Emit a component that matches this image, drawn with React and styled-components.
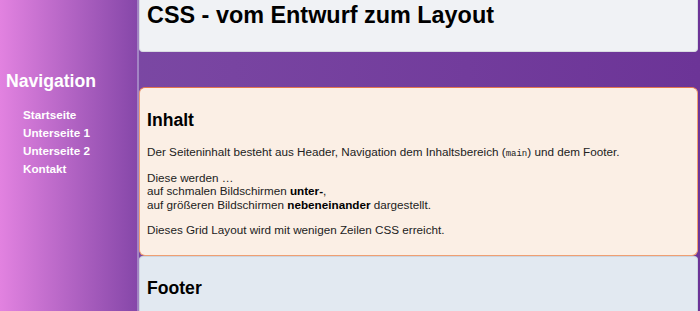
import React from 'react';
import styled, { createGlobalStyle } from 'styled-components';

const GlobalStyle = createGlobalStyle`
    html, body {
        margin: 0;
        padding: 0;
    }
    body {
        font-family: 'Liberation Sans', Arial, sans-serif;
        font-size: 11.7px;
        color: #222;
        background: linear-gradient(to right, #7e4ca6, #6c3497);
        overflow: hidden;
    }
`;

const links = ['Startseite', 'Unterseite 1', 'Unterseite 2', 'Kontakt'];

const App = () => {
    return (
        <>
            <GlobalStyle />
            <Page>
                <Nav>
                    <NavTitle>Navigation</NavTitle>
                    <NavList>
                        {links.map((link) => (
                            <li key={link}>
                                <NavLink href="#">{link}</NavLink>
                            </li>
                        ))}
                    </NavList>
                </Nav>
                <Header>
                    <Title>CSS - vom Entwurf zum Layout</Title>
                </Header>
                <Main>
                    <SectionTitle>Inhalt</SectionTitle>
                    <Text>
                        Der Seiteninhalt besteht aus Header, Navigation dem
                        Inhaltsbereich (<Code>main</Code>) und dem Footer.
                    </Text>
                    <Text>
                        Diese werden …
                        <br />
                        auf schmalen Bildschirmen <b>unter-</b>,
                        <br />
                        auf größeren Bildschirmen <b>nebeneinander</b>{' '}
                        dargestellt.
                    </Text>
                    <Text>Dieses Grid Layout wird mit wenigen Zeilen CSS erreicht.</Text>
                </Main>
                <Footer>
                    <SectionTitle>Footer</SectionTitle>
                </Footer>
            </Page>
        </>
    );
};

const Page = styled.div`
    display: grid;
    grid-template-columns: 139px 1fr;
    grid-template-rows: auto auto 1fr;
    min-height: 100vh;
    padding-right: 2px;
`;

const Nav = styled.nav`
    grid-column: 1;
    grid-row: 1 / span 3;
    background: linear-gradient(to right, #e282e0, #8647a9);
    border-right: 2px solid #a384c4;
    padding: 56px 6px 0;
`;

const NavTitle = styled.h2`
    margin: 15px 0 14px;
    font-size: 17.6px;
    font-weight: bold;
    color: #fff;
`;

const NavList = styled.ul`
    list-style: none;
    margin: 0;
    padding: 0 0 0 17px;
    li {
        line-height: 18px;
    }
`;

const NavLink = styled.a`
    color: #fff;
    font-weight: bold;
    font-size: 11.7px;
    text-decoration: none;
`;

const Header = styled.header`
    grid-column: 2;
    background: #f0f2f5;
    border: 1px solid #d9dbe2;
    border-top: none;
    border-radius: 0 0 4px 4px;
    padding: 2px 7px 6px;
`;

const Title = styled.h1`
    margin: 0 0 16px;
    font-size: 23.4px;
    font-weight: bold;
    color: #000;
`;

const Main = styled.main`
    grid-column: 2;
    margin-top: 35px;
    background: #fbefe5;
    border: 1px solid #ef9f72;
    border-top-color: #e3764f;
    border-radius: 6px;
    padding: 7px;
`;

const SectionTitle = styled.h2`
    margin: 15px 0 14px;
    font-size: 17.6px;
    font-weight: bold;
    color: #000;
`;

const Text = styled.p`
    margin: 1em 0;
    line-height: 13.6px;
    b {
        color: #000;
    }
`;

const Code = styled.code`
    font-family: 'Liberation Mono', 'Courier New', monospace;
    font-size: 9px;
    line-height: 1;
`;

const Footer = styled.footer`
    grid-column: 2;
    background: #e2e9f1;
    border: 1px solid #cdd5df;
    border-bottom: none;
    border-radius: 4px 4px 0 0;
    padding: 6px 7px;
`;

export default App;
